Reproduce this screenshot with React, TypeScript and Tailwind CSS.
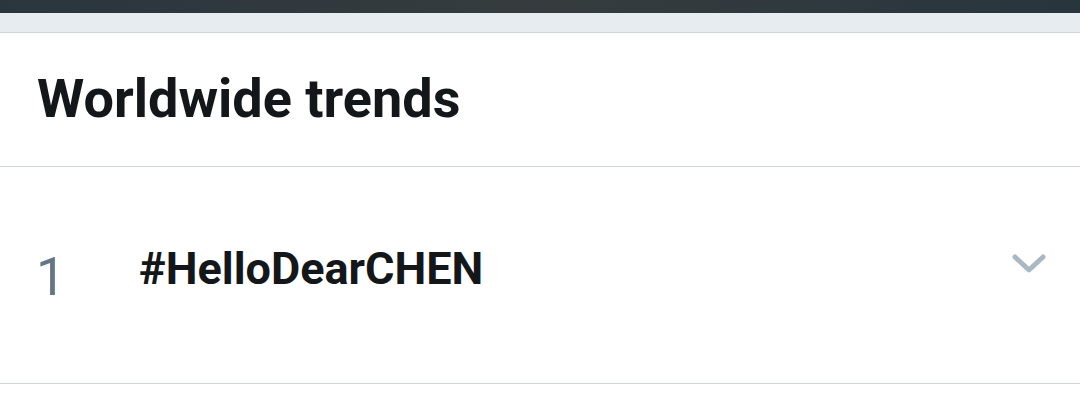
import React from 'react'

export default function App() {
  return (
    <div className="w-[1080px] h-[401px] bg-white overflow-hidden" style={{ fontFamily: 'Roboto, "Liberation Sans", sans-serif' }}>
      {/* status area */}
      <div className="h-[13px] bg-gradient-to-r from-[#2a353d] via-[#363c3e] to-[#28353d]" />
      <div className="h-[19px] bg-[#e6ecf0] border-b border-[#ccd6dd] box-content" />

      {/* header */}
      <div className="h-[134px] flex items-center px-[37px] border-b border-[#ccd6dd]">
        <h1 className="text-[54px] font-bold text-[#14171a] leading-none pb-[2px]">Worldwide trends</h1>
      </div>

      {/* trend row */}
      <div className="h-[217px] flex items-center border-b border-[#ccd6dd]">
        <div className="w-[139px] pl-[36px] text-[53px] text-[#657786] leading-none pt-[4px]">1</div>
        <div className="flex-1 text-[45px] font-bold text-[#14171a] leading-none pb-[14px]">#HelloDearCHEN</div>
        <div className="pr-[34px] pb-[22px]">
          <svg width="34" height="20" viewBox="0 0 34 20" fill="none">
            <path d="M3 3 L17 16 L31 3" stroke="#aab8c2" strokeWidth="5" strokeLinecap="round" strokeLinejoin="round" />
          </svg>
        </div>
      </div>
    </div>
  )
}
